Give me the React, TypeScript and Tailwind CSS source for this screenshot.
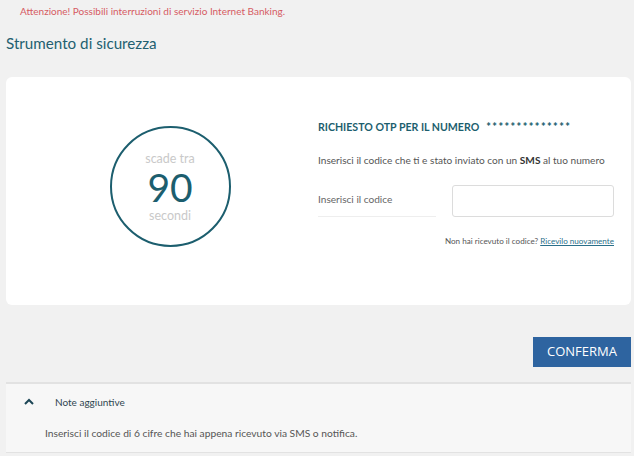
import React from "react";

export default function App() {
  return (
    <div className="w-[634px] h-[456px] bg-[#f1f1f1] overflow-hidden" style={{ fontFamily: "Lato, 'Open Sans', sans-serif" }}>
      <div className="pl-[20px] pt-[4px] text-[10px] leading-[14px] text-[#d65b63]">
        Attenzione! Possibili interruzioni di servizio Internet Banking.
      </div>
      <div className="pl-[6px] pt-[15px] text-[15.2px] leading-[20px] text-[#235f70]">Strumento di sicurezza</div>
      <div className="ml-[6px] mr-[3px] mt-[24px] h-[228px] bg-white rounded-[6px] flex">
        <div className="w-[304px] shrink-0 flex items-center justify-center pl-[24px] pb-[10px]">
          <div className="w-[121px] h-[121px] rounded-full border-2 border-[#1c5e6e] flex flex-col items-center justify-center pt-[2px]">
            <div className="text-[12.5px] leading-[14px] text-[#c9c9c9]">scade tra</div>
            <div className="mt-[2px] text-[39px] leading-[38px] text-[#1c5e6e]">90</div>
            <div className="mt-[3px] text-[12.5px] leading-[14px] text-[#c9c9c9]">secondi</div>
          </div>
        </div>
        <div className="flex-1 min-w-0 pt-[43px] pl-[8px] pr-[17px]">
          <div className="flex items-center text-[10.6px] leading-[14px] font-bold text-[#1c5e6e]">
            <span>RICHIESTO OTP PER IL NUMERO</span>
            <span className="ml-[7px] tracking-[1.4px] font-black text-[11px]">**************</span>
          </div>
          <div className="mt-[19px] text-[10.1px] leading-[14px] text-[#555]">
            Inserisci il codice che ti e stato inviato con un <b className="text-[#333]">SMS</b> al tuo numero
          </div>
          <div className="mt-[18px] flex items-start">
            <div className="w-[118px] h-[32px] shrink-0 border-b border-[#eee] text-[10.1px] leading-[14px] text-[#666] pt-[7px]">Inserisci il codice</div>
            <input className="ml-[16px] min-w-0 w-full flex-1 h-[32px] border border-[#dcdcdc] rounded-[3px] outline-none" />
          </div>
          <div className="mt-[18px] text-right text-[8.1px] leading-[12px] text-[#555]">
            Non hai ricevuto il codice? <span className="text-[#2a6f8a] underline">Ricevilo nuovamente</span>
          </div>
        </div>
      </div>
      <div className="flex justify-end pr-[3px] mt-[32px]">
        <button className="w-[98px] h-[30px] bg-[#2e64a0] text-white text-[13px]" style={{ fontFamily: "'Open Sans', sans-serif" }}>CONFERMA</button>
      </div>
      <div className="ml-[6px] mr-[3px] mt-[15px] border-t-2 border-b border-[#e2e2e2] bg-[#f7f7f7] h-[71px]">
        <div className="flex items-center pt-[11px] pl-[17px]">
          <svg width="12" height="12" viewBox="0 0 12 12" fill="none" stroke="#1c4656" strokeWidth="2">
            <path d="M2 8 L6 4 L10 8" />
          </svg>
          <span className="ml-[20px] text-[10px] leading-[14px] text-[#2f4650]">Note aggiuntive</span>
        </div>
        <div className="pl-[39px] pt-[17px] text-[10.25px] leading-[14px] text-[#555]">
          Inserisci il codice di 6 cifre che hai appena ricevuto via SMS o notifica.
        </div>
      </div>
    </div>
  );
}
